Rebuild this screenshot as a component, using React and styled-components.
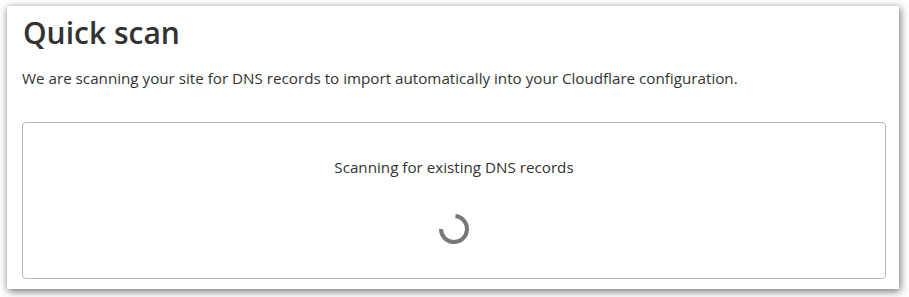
import React from "react";
import styled, { createGlobalStyle } from "styled-components";

const GlobalStyle = createGlobalStyle`
  body {
    margin: 0;
    background: #ffffff;
    font-family: "Open Sans", "Noto Sans", sans-serif;
    color: #333333;
  }
`;

const Page = styled.div`
  padding: 6px 10px 8px 7px;
`;

const Panel = styled.section`
  box-sizing: border-box;
  width: 892px;
  height: 283px;
  background: #ffffff;
  box-shadow: 1px 2px 8px rgba(0, 0, 0, 0.6);
  padding: 9px 13px 10px 15px;
  display: flex;
  flex-direction: column;
`;

const Title = styled.h1`
  margin: 0 0 0 1px;
  font-size: 30px;
  font-weight: 600;
  line-height: 36px;
  color: #333333;
`;

const Lead = styled.p`
  margin: 17px 0 0 0;
  font-size: 15.2px;
  line-height: 20px;
  color: #333333;
`;

const Card = styled.div`
  box-sizing: border-box;
  margin-top: 34px;
  height: 157px;
  border: 1px solid #b8b8b8;
  border-radius: 4px;
  display: flex;
  flex-direction: column;
  align-items: center;
  padding-top: 34px;
`;

const Status = styled.div`
  font-size: 15.2px;
  line-height: 20px;
  color: #333333;
`;

const Spinner = styled.svg`
  margin-top: 36px;
  width: 32px;
  height: 32px;
`;

export default function App() {
  return (
    <>
      <GlobalStyle />
      <Page>
        <Panel>
          <Title>Quick scan</Title>
          <Lead>
            We are scanning your site for DNS records to import automatically
            into your Cloudflare configuration.
          </Lead>
          <Card>
            <Status>Scanning for existing DNS records</Status>
            <Spinner viewBox="0 0 32 32">
              <path
                d="M17.5 3.1 A13 13 0 1 1 3 16"
                fill="none"
                stroke="#777777"
                strokeWidth="4"
              />
            </Spinner>
          </Card>
        </Panel>
      </Page>
    </>
  );
}
